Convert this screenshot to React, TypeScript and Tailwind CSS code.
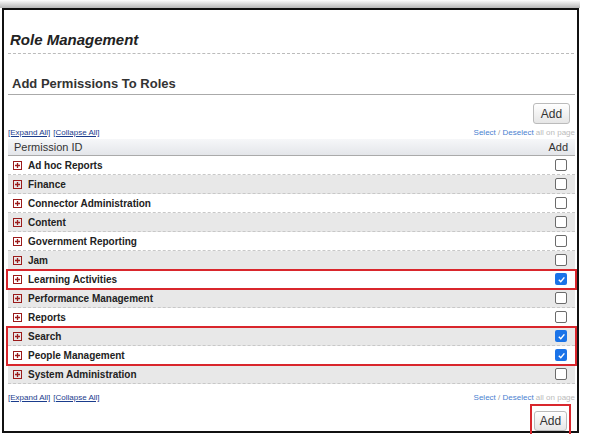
import React from "react";

const rows = [
  ["Ad hoc Reports", false],
  ["Finance", false],
  ["Connector Administration", false],
  ["Content", false],
  ["Government Reporting", false],
  ["Jam", false],
  ["Learning Activities", true],
  ["Performance Management", false],
  ["Reports", false],
  ["Search", true],
  ["People Management", true],
  ["System Administration", false],
] as [string, boolean][];

function Plus() {
  return (
    <svg width="9" height="9" viewBox="0 0 9 9" className="shrink-0">
      <rect x="0.5" y="0.5" width="8" height="8" fill="none" stroke="#9b1b1b" />
      <path d="M2 4.5H7M4.5 2V7" stroke="#9b1b1b" strokeWidth="1.3" />
    </svg>
  );
}

function Box({ checked }: { checked: boolean }) {
  return checked ? (
    <span className="w-[12px] h-[12px] rounded-[2px] bg-[#1a73e8] flex items-center justify-center">
      <svg width="9" height="9" viewBox="0 0 10 10">
        <path d="M2 5.2L4.2 7.4L8.2 2.6" stroke="white" strokeWidth="1.6" fill="none" />
      </svg>
    </span>
  ) : (
    <span className="w-[12px] h-[12px] rounded-[2px] border border-[#6b6b6b] bg-white" />
  );
}

function Row({ name, checked, i }: { name: string; checked: boolean; i: number }) {
  return (
    <div className={`h-[19px] flex items-center pl-[5px] pr-[8px] border-b border-dashed border-[#c8c8c8] ${i % 2 ? "bg-[#e8e8e8]" : "bg-white"}`}>
      <Plus />
      <span className="ml-[6px] text-[10px] font-bold text-[#222] flex-1">{name}</span>
      <Box checked={checked} />
    </div>
  );
}

function Links() {
  return (
    <div className="flex justify-between items-center text-[8px] h-[12px]">
      <span className="text-[#1a3c8c] underline">[Expand All]</span>
      <span className="flex-1 ml-[3px] text-[#1a3c8c]"><span className="underline">[Collapse All]</span></span>
      <span className="text-[#4a7fd0]">Select <span className="text-[#999]">/</span> Deselect <span className="text-[#bbb]">all on page</span></span>
    </div>
  );
}

export default function App() {
  const red = "absolute inset-x-[-2px] inset-y-[-1px] border-2 border-[#d9262c] pointer-events-none";
  return (
    <div className="w-[591px] h-[434px] bg-white relative" style={{ fontFamily: "'Liberation Sans', Arial, sans-serif" }}>
      <div className="h-[8px] bg-gradient-to-b from-white to-[#b8b8b8] w-[580px]" />
      <div className="ml-[2px] w-[577px] h-[425px] border-2 border-[#111] pl-[4px] pr-[2px]">
        <div className="pt-[19px] pl-[2px] text-[15px] font-bold italic text-[#222] h-[43px]">Role Management</div>
        <div className="border-b border-dashed border-[#bbb] mr-[1px]" />
        <div className="pt-[20px] pl-[4px] text-[13px] font-bold text-[#333] h-[40px]">Add Permissions To Roles</div>
        <div className="border-b border-[#aaa]" />
        <div className="flex justify-end pr-[5px] pt-[8px] h-[32px]">
          <button className="w-[37px] h-[21px] border border-[#bbb] rounded-[3px] bg-gradient-to-b from-white to-[#e6e6e6] text-[12px] text-[#333]">Add</button>
        </div>
        <Links />
        <div className="h-[17px] flex items-center justify-between px-[6px] bg-gradient-to-b from-[#f6f7f9] to-[#e4e6ea] border-b border-[#aaa] text-[11px] text-[#333]">
          <span>Permission ID</span>
          <span className="mr-[1px]">Add</span>
        </div>
        {rows.slice(0, 6).map(([n, c], i) => <Row key={n} name={n} checked={c} i={i} />)}
        <div className="relative"><Row name={rows[6][0]} checked i={6} /><span className={red} /></div>
        {rows.slice(7, 9).map(([n, c], i) => <Row key={n} name={n} checked={c} i={i + 7} />)}
        <div className="relative">
          <Row name={rows[9][0]} checked i={9} />
          <Row name={rows[10][0]} checked i={10} />
          <span className={red} />
        </div>
        <Row name={rows[11][0]} checked={false} i={11} />
        <div className="h-[8px]" />
        <Links />
        <div className="flex justify-end pr-[4px]">
          <div className="border-2 border-[#d9262c] p-[2px]">
            <button className="w-[33px] h-[20px] border border-[#bbb] rounded-[3px] bg-gradient-to-b from-white to-[#e6e6e6] text-[12px] text-[#333]">Add</button>
          </div>
        </div>
      </div>
    </div>
  );
}
